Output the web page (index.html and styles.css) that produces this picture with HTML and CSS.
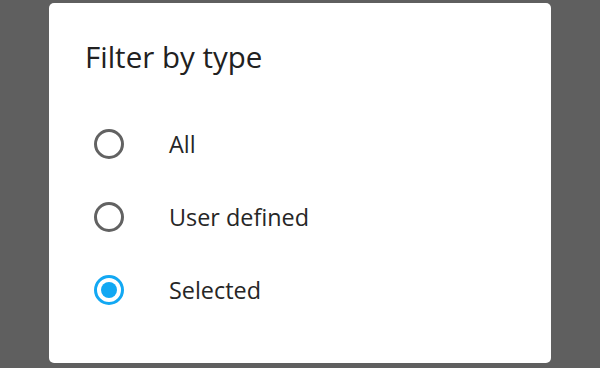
FILE: index.html
```html
<!DOCTYPE html>
<html>
<head>
<meta charset="utf-8">
<link rel="stylesheet" href="styles.css">
</head>
<body>
<div class="dialog">
  <h1 class="title">Filter by type</h1>
  <ul class="options">
    <li class="option"><span class="radio"></span><span class="label">All</span></li>
    <li class="option"><span class="radio"></span><span class="label">User defined</span></li>
    <li class="option"><span class="radio checked"></span><span class="label">Selected</span></li>
  </ul>
</div>
</body>
</html>
```
FILE: styles.css
```css
html, body {
  margin: 0;
  padding: 0;
  background: #5f5f5f;
  width: 600px;
  height: 368px;
  overflow: hidden;
}
.dialog {
  margin: 3px 49px 0 49px;
  height: 360px;
  background: #ffffff;
  border-radius: 5px;
  box-sizing: border-box;
  padding: 34px 0 0 36px;
  font-family: "Open Sans", sans-serif;
  color: #212121;
}
.title {
  margin: 0;
  font-size: 29.5px;
  font-weight: 400;
  line-height: 40px;
}
.options {
  list-style: none;
  margin: 53px 0 0 0;
  padding: 0;
  display: flex;
  flex-direction: column;
  gap: 45px;
}
.option {
  display: flex;
  align-items: center;
  height: 28px;
}
.radio {
  box-sizing: border-box;
  width: 30px;
  height: 30px;
  margin-left: 9px;
  border: 3px solid #626262;
  border-radius: 50%;
  display: flex;
  align-items: center;
  justify-content: center;
}
.radio.checked {
  border-color: #12a8f3;
}
.radio.checked::after {
  content: "";
  width: 16px;
  height: 16px;
  border-radius: 50%;
  background: #12a8f3;
}
.label {
  margin-left: 45px;
  font-size: 23.4px;
  color: #262626;
}
```
